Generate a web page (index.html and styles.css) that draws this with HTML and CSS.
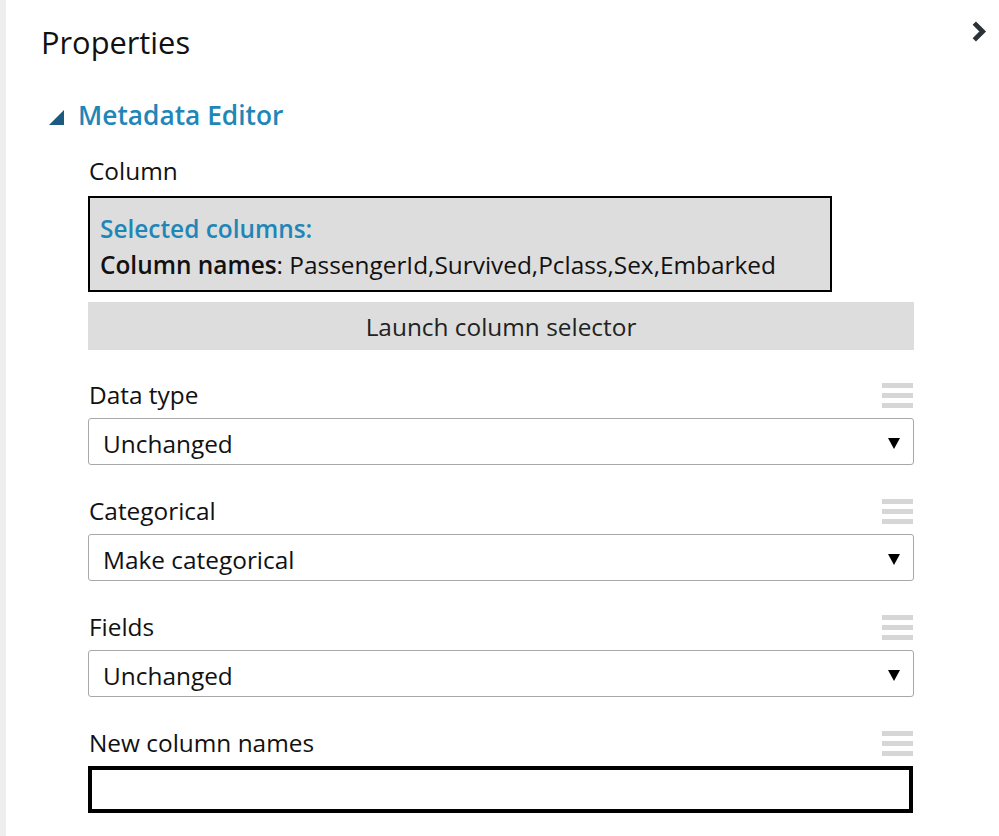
FILE: index.html
```html
<!DOCTYPE html>
<html lang="en">
<head>
<meta charset="utf-8">
<title>Properties</title>
<link rel="stylesheet" href="styles.css">
</head>
<body>
<div class="strip"></div>
<main class="panel">
  <header class="panel-head">
    <h1 class="title">Properties</h1>
    <svg class="collapse" width="16" height="20" viewBox="0 0 16 20"><polyline points="4,2 12,10 4,18" fill="none" stroke="#2b3137" stroke-width="4.5" stroke-linejoin="miter"/></svg>
  </header>
  <section class="group">
    <div class="group-head">
      <svg class="caret" width="15" height="15" viewBox="0 0 15 15"><polygon points="15,0 15,15 0,15" fill="#1d5b7e"/></svg>
      <h2 class="group-title">Metadata Editor</h2>
    </div>
    <div class="fields">
      <div class="field-head"><span class="label">Column</span></div>
      <div class="selected">
        <div class="sel-title">Selected columns:</div>
        <div class="sel-line"><b>Column names</b>: PassengerId,Survived,Pclass,Sex,Embarked</div>
      </div>
      <button class="launch">Launch column selector</button>

      <div class="field">
        <div class="field-head"><span class="label">Data type</span><span class="grip"><i></i><i></i><i></i></span></div>
        <div class="select"><span>Unchanged</span><span class="arrow"></span></div>
      </div>
      <div class="field">
        <div class="field-head"><span class="label">Categorical</span><span class="grip"><i></i><i></i><i></i></span></div>
        <div class="select"><span>Make categorical</span><span class="arrow"></span></div>
      </div>
      <div class="field">
        <div class="field-head"><span class="label">Fields</span><span class="grip"><i></i><i></i><i></i></span></div>
        <div class="select"><span>Unchanged</span><span class="arrow"></span></div>
      </div>
      <div class="field">
        <div class="field-head"><span class="label">New column names</span><span class="grip"><i></i><i></i><i></i></span></div>
        <div class="textbox"></div>
      </div>
    </div>
  </section>
</main>
</body>
</html>
```

FILE: styles.css
```css
html, body {
  margin: 0;
  padding: 0;
  height: 100%;
  background: #fff;
}
body {
  display: flex;
  font-family: "Open Sans", "Noto Sans", sans-serif;
  color: #111;
  overflow: hidden;
}
.strip {
  width: 6px;
  flex: none;
  background: #eeeeee;
}
.panel {
  flex: 1;
}
.panel-head {
  display: flex;
  justify-content: space-between;
  align-items: flex-start;
  padding: 21px 12px 0 35px;
  height: 58px;
  box-sizing: border-box;
}
.title {
  margin: 0;
  font-weight: 400;
  font-size: 30.8px;
  line-height: 42px;
  margin-top: 0;
  color: #111;
}
.collapse {
  display: block;
  width: 17px;
  height: 21px;
}
.group-head {
  display: flex;
  align-items: center;
  height: 40px;
  margin-top: 37px;
  padding-left: 43px;
}
.caret {
  display: block;
  margin-right: 14px;
  margin-top: 5px;
}
.group-title {
  margin: 0;
  font-size: 26.3px;
  font-weight: 600;
  color: #1f86b8;
  line-height: 40px;
}
.fields {
  margin-left: 82px;
  width: 826px;
  margin-top: 21px;
}
.field-head {
  display: flex;
  justify-content: space-between;
  align-items: center;
  height: 30px;
}
.label {
  font-size: 24.4px;
  line-height: 30px;
  padding-left: 1px;
}
.selected {
  margin-top: 10px;
  width: 744px;
  box-sizing: border-box;
  border: 2px solid #000;
  background: #dddddd;
  padding: 13px 10px 7px;
  font-size: 24.4px;
  line-height: 36px;
}
.sel-title {
  color: #1f86b8;
  font-weight: 600;
}
.sel-line b {
  font-weight: 600;
}
.launch {
  display: block;
  width: 100%;
  height: 48px;
  margin-top: 10px;
  border: 0;
  background: #dddddd;
  font-family: inherit;
  font-size: 24.4px;
  color: #222;
  padding: 0;
}
.field {
  margin-top: 30px;
}
.field + .field {
  margin-top: 31px;
}
.grip {
  display: flex;
  flex-direction: column;
  gap: 5px;
  width: 31px;
  margin-right: 1px;
}
.grip i {
  display: block;
  height: 5px;
  background: #d6d6d6;
}
.select {
  margin-top: 8px;
  height: 47px;
  box-sizing: border-box;
  border: 1px solid #a8a8a8;
  border-radius: 3px;
  display: flex;
  align-items: center;
  justify-content: space-between;
  padding: 3px 13px 0 14px;
  font-size: 24.4px;
}
.arrow {
  width: 0;
  height: 0;
  border-left: 6px solid transparent;
  border-right: 6px solid transparent;
  border-top: 11px solid #000;
}
.textbox {
  margin-top: 8px;
  height: 47px;
  width: 825px;
  box-sizing: border-box;
  border: 4px solid #000;
}
```
